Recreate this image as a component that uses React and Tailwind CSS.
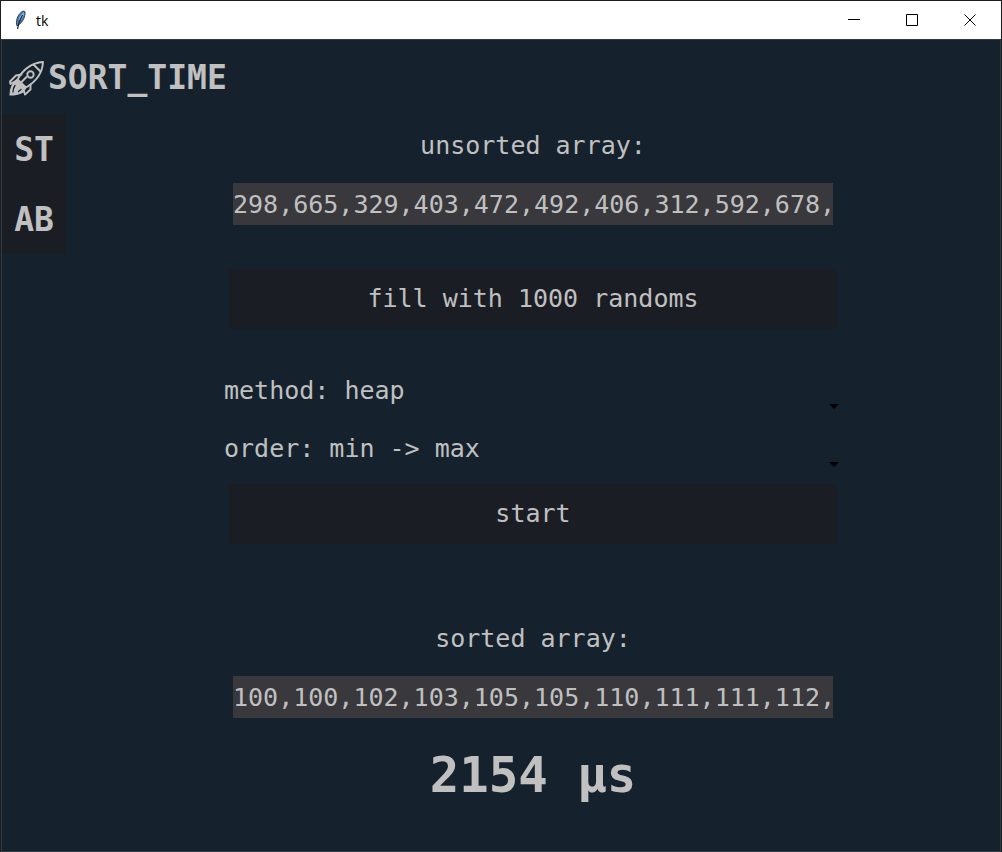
import { useState } from "react";

const MONO = "font-['DejaVu_Sans_Mono','Liberation_Mono',monospace]";

function Feather() {
  return (
    <svg width="16" height="20" viewBox="0 0 16 20" aria-hidden="true">
      <path d="M4 16C2.500 12 4 5.500 8.500 2C10 0.800 11.600 0.800 12 2C12.400 6 10 12.500 5.200 15Z" fill="#4a7ab5" stroke="#2a3440" strokeWidth="0.900" />
      <path d="M5.500 10C6.500 6 8.500 3.500 11 2.200C11.200 5 10 7.500 8 10Z" fill="#8fb8e4" />
      <path d="M9.500 5C7 9 5.500 13 4.500 19" fill="none" stroke="#14202c" strokeWidth="1.200" />
    </svg>
  );
}

function Rocket() {
  return (
    <svg width="37" height="37" viewBox="0 0 37 37" fill="none" stroke="#c0c0c0" strokeWidth="1.900" strokeLinejoin="round" strokeLinecap="round" aria-hidden="true">
      <path d="M9.500 19.500C15 9.500 24 3 35 2C34.500 12.500 28 21.500 18 27.500Z" />
      <path d="M25.500 4.500Q29 8 32.500 11.500" />
      <circle cx="22.500" cy="14.500" r="3.200" />
      <path d="M13.500 14.500L8 15.500L2 21.500L2.500 24L8.500 20.500" />
      <path d="M22.500 24.500L22.500 29.500L17 34.500L15.500 30" />
      <path d="M13 22.500L18.500 17" />
      <path d="M8.500 20L17.500 28.500L15 32C11 34.500 6 35 2 35C2 30 3 25 8.500 20Z" fill="#c0c0c0" strokeWidth="1.200" />
      <path d="M5 32C5 29.500 5.500 27.500 7 25.500M10.500 31.500L13 29.500" stroke="#15222e" strokeWidth="1.300" />
    </svg>
  );
}

function CaptionButton({ label, children }) {
  return (
    <button type="button" aria-label={label} className="flex h-full w-[58px] items-center justify-center hover:bg-gray-200">
      <svg width="12" height="12" viewBox="0 0 12 12" fill="none" stroke="#000" aria-hidden="true">{children}</svg>
    </button>
  );
}

function ArrayField({ id, label, value, onChange, readOnly }) {
  return (
    <div className="flex w-full flex-col items-center gap-[13px]">
      <label htmlFor={id} className="leading-[48px]">{label}</label>
      <input
        id={id}
        value={value}
        onChange={onChange}
        readOnly={readOnly}
        className="h-[42px] w-full max-w-[600px] bg-[#38383d] outline-none"
      />
    </div>
  );
}

function ActionButton({ children, onClick }) {
  return (
    <button type="button" onClick={onClick} className="h-[60px] w-full max-w-[608px] bg-[#1b1d24] hover:bg-[#22252d]">
      {children}
    </button>
  );
}

function Picker({ label, options }) {
  return (
    <div className="relative w-full">
      <select aria-label={label} className="block h-[58px] w-full appearance-none bg-[#15222e] outline-none">
        {options.map((o) => <option key={o}>{`${label}: ${o}`}</option>)}
      </select>
      <svg className="pointer-events-none absolute right-[3px] bottom-[11px]" width="10" height="5" viewBox="0 0 10 5" aria-hidden="true">
        <path d="M0 0H10L5 5Z" fill="#000" />
      </svg>
    </div>
  );
}

export default function App() {
  const [values, setValues] = useState("298,665,329,403,472,492,406,312,592,678,");
  const [sorted, setSorted] = useState("100,100,102,103,105,105,110,111,111,112,");

  const fill = () =>
    setValues(Array.from({ length: 1000 }, () => 100 + Math.floor(Math.random() * 900)).join(","));
  const sort = () =>
    setSorted(values.split(",").filter(Boolean).map(Number).sort((a, b) => a - b).join(","));

  return (
    <div className="flex min-h-screen flex-col border-x border-t border-[#1e1e1e] bg-[#15222e]">
      <header className="flex h-[38px] items-center bg-white pr-[2px] pl-3">
        <Feather />
        <span className="grow pl-[7px] font-['Open_Sans',sans-serif] text-[14px] text-black">tk</span>
        <CaptionButton label="Minimize"><path d="M0 5.500H12" /></CaptionButton>
        <CaptionButton label="Maximize"><path d="M0.500 0.500H11.500V11.500H0.500Z" /></CaptionButton>
        <CaptionButton label="Close"><path d="M0.500 0.500L11.500 11.500M11.500 0.500L0.500 11.500" /></CaptionButton>
      </header>
      <div className={`flex grow flex-col border border-[#303b45] text-[25px] text-[#c0c0c0] ${MONO}`}>
        <div className="flex h-[74px] items-center gap-[3px] pt-[2px] pl-[6px]">
          <Rocket />
          <h1 className="text-[33px] font-bold">SORT_TIME</h1>
        </div>
        <div className="flex grow items-start">
          <nav className="flex w-16 shrink-0 flex-col bg-[#1b1d24] text-[33px] font-bold">
            <button type="button" className="h-[70px] pt-[2px] hover:bg-[#22252d]">ST</button>
            <button type="button" className="h-[70px] pt-[2px] hover:bg-[#22252d]">AB</button>
          </nav>
          <main className="flex min-w-0 grow flex-col items-center pt-2">
            <ArrayField id="unsorted" label="unsorted array:" value={values} onChange={(e) => setValues(e.target.value)} />
            <div className="mt-11 flex w-full justify-center">
              <ActionButton onClick={fill}>fill with 1000 randoms</ActionButton>
            </div>
            <div className="mt-[33px] mb-[6px] w-full max-w-[618px]">
              <Picker label="method" options={["heap", "quick", "merge", "bubble"]} />
              <Picker label="order" options={["min -> max", "max -> min"]} />
            </div>
            <ActionButton onClick={sort}>start</ActionButton>
            <div className="mt-[71px] w-full">
              <ArrayField id="sorted" label="sorted array:" value={sorted} readOnly />
            </div>
            <output className="mt-7 text-[49px] leading-[60px] font-bold">2154 µs</output>
          </main>
        </div>
      </div>
    </div>
  );
}
